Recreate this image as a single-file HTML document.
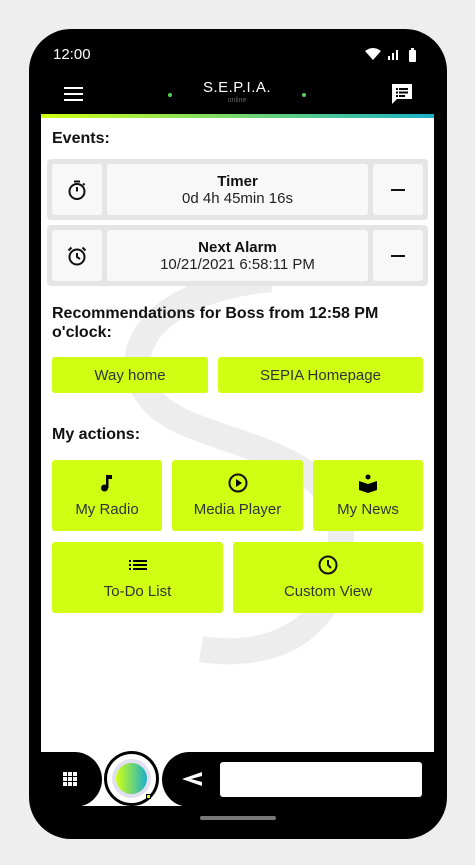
<!DOCTYPE html>
<html><head><meta charset="utf-8"><style>
*{margin:0;padding:0;box-sizing:border-box}
body{width:475px;height:865px;background:#eeeeee;position:relative;overflow:hidden;font-family:"Liberation Sans",Arial,sans-serif}
.a{position:absolute}
.phone{left:29px;top:29px;width:418px;height:810px;background:#000;border-radius:42px}
.screen{left:41px;top:118px;width:393px;height:688px;background:#fff}
.h{font-weight:bold;font-size:16px;color:#111}
.box{background:#e5e5e5;border-radius:4px}
.cell{background:#f8f8f8;border-radius:3px;display:flex;align-items:center;justify-content:center;flex-direction:column;font-size:15px;color:#222}
.btn{background:#d0ff14;border-radius:3px;display:flex;align-items:center;justify-content:center;flex-direction:column;font-size:15px;color:#333}
.btn svg{margin-bottom:8px}
</style></head><body>
<div class="a phone"></div>
<div class="a" style="left:53px;top:46px;color:#fff;font-size:15px">12:00</div>
<svg class="a" style="left:364px;top:47px" width="60" height="16" viewBox="0 0 60 16">
<path d="M1 4 Q9 -2 17 4 L9 13Z" fill="#fff"/>
<rect x="24" y="9" width="2" height="4" fill="#fff"/><rect x="28" y="6" width="2" height="7" fill="#fff"/><rect x="32" y="3" width="2" height="10" fill="#fff"/>
<rect x="45" y="3" width="7" height="12" rx="1" fill="#fff"/><rect x="47" y="1" width="3" height="2" fill="#fff"/>
</svg>
<div class="a" style="left:64px;top:87px;width:19px;height:2px;background:#fff;box-shadow:0 6px 0 #fff,0 12px 0 #fff"></div>
<div class="a" style="left:168px;top:93px;width:4px;height:4px;border-radius:50%;background:#5c5"></div>
<div class="a" style="left:302px;top:93px;width:4px;height:4px;border-radius:50%;background:#5c5"></div>
<div class="a" style="left:200px;top:79px;width:74px;text-align:center;color:#fff;font-size:15px;letter-spacing:0.5px">S.E.P.I.A.</div>
<div class="a" style="left:200px;top:97px;width:74px;text-align:center;color:#666;font-size:7px">online</div>
<svg class="a" style="left:391px;top:83px" width="22" height="22" viewBox="0 0 22 22"><path d="M1 1H21V16H6L1 21Z" fill="#fff"/><rect x="5" y="5" width="2" height="2"/><rect x="8" y="5" width="9" height="2"/><rect x="5" y="8.5" width="2" height="2"/><rect x="8" y="8.5" width="9" height="2"/><rect x="5" y="12" width="2" height="2"/><rect x="8" y="12" width="6" height="2"/></svg>
<div class="a" style="left:41px;top:114px;width:393px;height:5px;background:linear-gradient(90deg,#d0ff14,#1ab0c8)"></div>
<div class="a screen"></div>
<svg class="a" style="left:41px;top:119px" width="393" height="633" viewBox="0 0 393 633">
<path d="M230 160 C120 170 70 230 110 280 C150 330 300 320 300 420 C300 520 220 540 160 530" fill="none" stroke="#ededed" stroke-width="26"/>
</svg>
<div class="a h" style="left:52px;top:130px">Events:</div>
<div class="a box" style="left:47px;top:159px;width:381px;height:61px"></div>
<div class="a cell" style="left:52px;top:164px;width:50px;height:51px"><svg width="22" height="22" viewBox="0 0 22 22" fill="none" stroke="#111" stroke-width="2"><circle cx="11" cy="12.5" r="7.5"/><path d="M8 2.5h6M11 8v4.5M17 6l1.5-1.5"/></svg></div>
<div class="a cell" style="left:107px;top:164px;width:261px;height:51px"><b style="color:#111">Timer</b><span>0d 4h 45min 16s</span></div>
<div class="a cell" style="left:373px;top:164px;width:50px;height:51px"><div style="width:14px;height:2px;background:#111"></div></div>
<div class="a box" style="left:47px;top:225px;width:381px;height:61px"></div>
<div class="a cell" style="left:52px;top:230px;width:50px;height:51px"><svg width="22" height="22" viewBox="0 0 22 22" fill="none" stroke="#111" stroke-width="2"><circle cx="11" cy="12" r="7.5"/><path d="M11 8v4l3 2M2.5 5.5l3-3M19.5 5.5l-3-3"/></svg></div>
<div class="a cell" style="left:107px;top:230px;width:261px;height:51px"><b style="color:#111">Next Alarm</b><span>10/21/2021 6:58:11 PM</span></div>
<div class="a cell" style="left:373px;top:230px;width:50px;height:51px"><div style="width:14px;height:2px;background:#111"></div></div>
<div class="a h" style="left:52px;top:304px;width:360px;line-height:19px">Recommendations for Boss from 12:58 PM o'clock:</div>
<div class="a btn" style="left:52px;top:357px;width:156px;height:36px">Way home</div>
<div class="a btn" style="left:218px;top:357px;width:205px;height:36px">SEPIA Homepage</div>
<div class="a h" style="left:52px;top:426px">My actions:</div>
<div class="a btn" style="left:52px;top:460px;width:110px;height:71px"><svg width="20" height="20" viewBox="0 0 20 20"><rect x="9" y="2" width="2.5" height="13"/><path d="M9 2h6v4h-4z"/><circle cx="7.5" cy="15" r="3.5"/></svg>My Radio</div>
<div class="a btn" style="left:172px;top:460px;width:131px;height:71px"><svg width="20" height="20" viewBox="0 0 20 20"><circle cx="10" cy="10" r="8.5" fill="none" stroke="#111" stroke-width="2"/><path d="M8 6v8l6-4z"/></svg>Media Player</div>
<div class="a btn" style="left:313px;top:460px;width:110px;height:71px"><svg width="20" height="20" viewBox="0 0 20 20"><circle cx="10" cy="4" r="2.5"/><path d="M1 8l9 3 9-3v9l-9 3-9-3z"/></svg>My News</div>
<div class="a btn" style="left:52px;top:542px;width:171px;height:71px"><svg width="20" height="20" viewBox="0 0 20 20"><rect x="1" y="5" width="2" height="2"/><rect x="5" y="5" width="14" height="2"/><rect x="1" y="9" width="2" height="2"/><rect x="5" y="9" width="14" height="2"/><rect x="1" y="13" width="2" height="2"/><rect x="5" y="13" width="14" height="2"/></svg>To-Do List</div>
<div class="a btn" style="left:233px;top:542px;width:190px;height:71px"><svg width="20" height="20" viewBox="0 0 20 20" fill="none" stroke="#111" stroke-width="2"><circle cx="10" cy="10" r="8.5"/><path d="M10 5v5l3 3"/></svg>Custom View</div>
<div class="a" style="left:30px;top:752px;width:72px;height:55px;background:#000;border-radius:0 28px 28px 0"></div>
<svg class="a" style="left:63px;top:772px" width="14" height="14" viewBox="0 0 14 14" fill="#fff"><rect x="0" y="0" width="4" height="4"/><rect x="5" y="0" width="4" height="4"/><rect x="10" y="0" width="4" height="4"/><rect x="0" y="5" width="4" height="4"/><rect x="5" y="5" width="4" height="4"/><rect x="10" y="5" width="4" height="4"/><rect x="0" y="10" width="4" height="4"/><rect x="5" y="10" width="4" height="4"/><rect x="10" y="10" width="4" height="4"/></svg>
<div class="a" style="left:104px;top:751px;width:55px;height:55px;border-radius:50%;border:3px solid #000;background:#fff"></div>
<div class="a" style="left:112px;top:759px;width:39px;height:39px;border-radius:50%;background:#e0e0f0"></div>
<div class="a" style="left:116px;top:763px;width:31px;height:31px;border-radius:50%;background:linear-gradient(90deg,#d0ff14,#1ab0c8)"></div>
<div class="a" style="left:146px;top:794px;width:5px;height:5px;background:#d0ff14;border:1px solid #000"></div>
<div class="a" style="left:162px;top:752px;width:272px;height:55px;background:#000;border-radius:28px 0 0 28px"></div>
<svg class="a" style="left:181px;top:771px" width="22" height="16" viewBox="0 0 22 16"><path d="M21 1L1 8l20 7v-4L10 8l11-3z" fill="#fff"/></svg>
<div class="a" style="left:220px;top:762px;width:202px;height:35px;background:#fff;border-radius:3px"></div>
<div class="a" style="left:200px;top:816px;width:76px;height:4px;border-radius:2px;background:#777"></div>
</body></html>
